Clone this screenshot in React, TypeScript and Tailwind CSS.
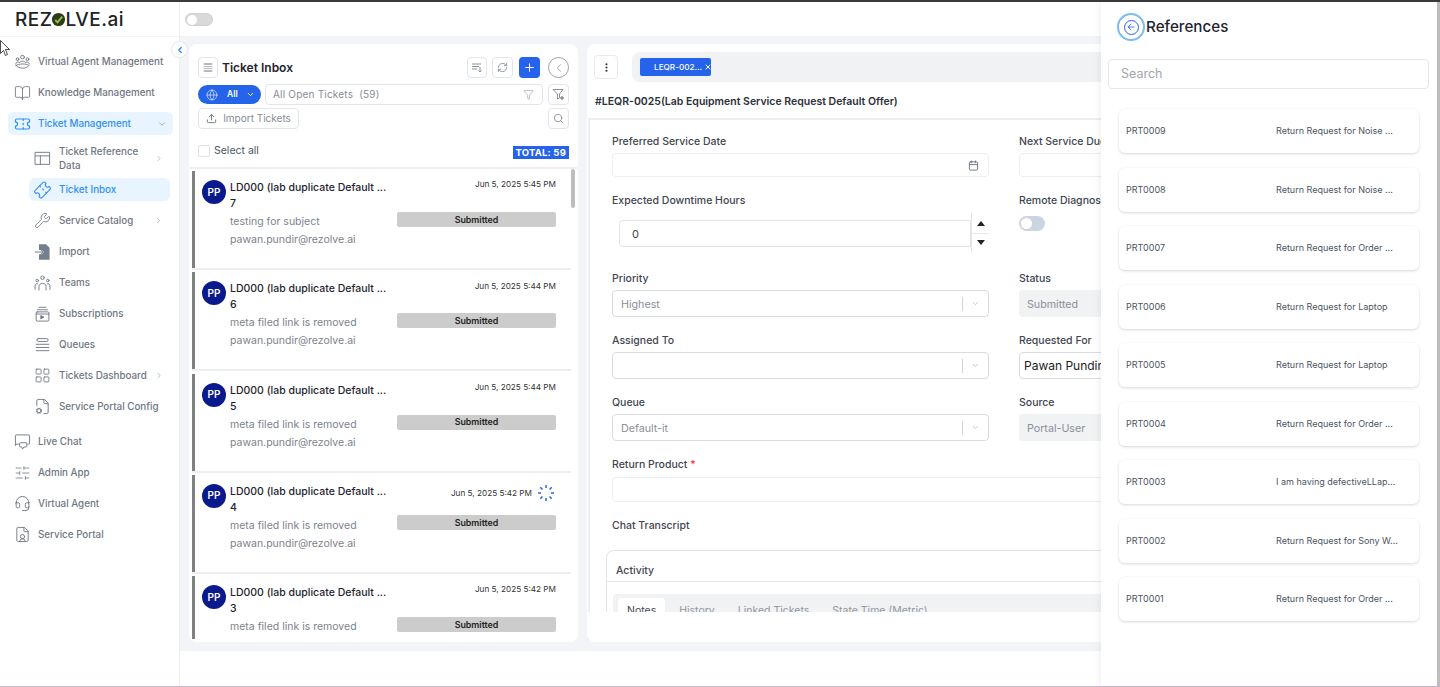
import { ChevronDown, ChevronRight, ChevronLeft, BookOpen, Ticket, Wrench, LayoutGrid, FileCog, SlidersHorizontal, Headset, FileUser, Calendar, Globe, Filter, RefreshCw, Plus, Upload, Search, ArrowLeft, EllipsisVertical, X } from "lucide-react";
import type { ReactNode } from "react";

const font = { fontFamily: "Inter, 'Noto Sans', sans-serif" };

function Svg({ children, size = 20 }: { children: ReactNode; size?: number }) {
  return (
    <svg width={size} height={size} viewBox="0 0 24 24" fill="none" stroke="currentColor" strokeWidth={1.3} strokeLinecap="round" strokeLinejoin="round">
      {children}
    </svg>
  );
}

const AgentIcon = () => (
  <Svg>
    <circle cx="12" cy="5" r="2.6" />
    <circle cx="5" cy="8" r="2" />
    <circle cx="19" cy="8" r="2" />
    <path d="M7.500 13c1-3 8-3 9 0M2.500 15c0-2.500 2-3.500 4-3M21.500 15c0-2.500-2-3.500-4-3M3 17c3 5 15 5 18 0-3-3-15-3-18 0z" />
  </Svg>
);
const TableIcon = () => (
  <Svg>
    <rect x="2" y="4" width="20" height="17" />
    <path d="M2 9h20M9 9v12" />
  </Svg>
);
const ImportIcon = () => (
  <svg width="20" height="20" viewBox="0 0 24 24" fill="#74808f">
    <path d="M7 1h10l5 5v17H7v-8h4l3-3-3-3H7z" />
    <path d="M1 12h12M10 9l3 3-3 3" fill="none" stroke="#74808f" strokeWidth="1.400" />
  </svg>
);
const TeamsIcon = () => (
  <Svg>
    <circle cx="12" cy="4.500" r="2.500" />
    <circle cx="4.500" cy="8.500" r="1.800" />
    <circle cx="19.500" cy="8.500" r="1.800" />
    <path d="M7 22v-5c0-6 10-6 10 0v5M1.500 21v-5c0-2.500 2-3.500 3.500-3M22.500 21v-5c0-2.500-2-3.500-3.500-3" />
  </Svg>
);
const SubsIcon = () => (
  <Svg>
    <path d="M7 2.500h10M5 6h14" />
    <rect x="3" y="9" width="18" height="13" rx="1.500" />
    <path d="M3 12h18" />
    <path d="M10 14.500l4 2-4 2z" fill="currentColor" />
  </Svg>
);
const QueueIcon = () => (
  <Svg>
    <rect x="4" y="3" width="16" height="4" rx="2" />
    <path d="M3 11h18M3 15.500h18M3 20h18" />
  </Svg>
);
const ChatIcon = () => (
  <svg width="20" height="20" viewBox="0 0 24 24" fill="none" stroke="currentColor" strokeWidth={1.3} strokeLinejoin="round">
    <path d="M3 2h18q1 0 1 1v11q0 1-1 1h-2M7 15H3l-1 2V3q0-1 1-1" />
    <path d="M9 13h8q1 0 1 1v4q0 1-1 1h-3l-2 3-1-3H9q-1 0-1-1v-4q0-1 1-1z" />
  </svg>
);

function NavItem({ icon, label, active, chevron }: { icon: ReactNode; label: string; active?: boolean; chevron?: boolean }) {
  return (
    <div className={`flex items-center h-[23px] ml-2 mr-[6px] pl-[6px] pr-[6px] gap-[7px] rounded-md ${active ? "bg-[#e8f4ff] text-[#2f8ff5]" : "text-[#6f7683]"}`}>
      <span className="w-[17px] flex justify-center shrink-0">{icon}</span>
      <span className="text-[9.8px] font-medium flex-1 whitespace-nowrap translate-y-px">{label}</span>
      {chevron && <ChevronDown size={10} className="text-gray-400" />}
    </div>
  );
}

function SubItem({ icon, label, active, chevron }: { icon: ReactNode; label: string; active?: boolean; chevron?: boolean }) {
  return (
    <div className={`flex items-center h-[23px] ml-[29px] mr-[9px] pl-[5px] gap-[8px] rounded-md ${active ? "bg-[#e8f4ff] text-[#2f8ff5]" : "text-[#6f7683]"}`}>
      <span className="w-[17px] flex justify-center shrink-0">{icon}</span>
      <span className="text-[9.8px] font-medium flex-1 whitespace-nowrap translate-y-px">{label}</span>
      {chevron && <ChevronRight size={9} className="text-gray-400 mr-[7px]" />}
    </div>
  );
}

function Sidebar() {
  return (
    <aside className="w-[180px] shrink-0 bg-white border-r border-[#eceef3] flex flex-col relative h-full">
      <div className="h-[35px] flex items-center pl-[15px] border-b border-[#f3f4f6]">
        <span className="text-[19px] font-medium tracking-[0.5px] text-[#222] flex items-center leading-none">
          REZ
          <svg width="15" height="15" viewBox="0 0 16 16" className="mx-[-1px]">
            <circle cx="8" cy="8" r="7" fill="#2e3a1a" />
            <path d="M4.500 8.500l2.500 2.500 5-6" fill="none" stroke="#8cc63f" strokeWidth="2" />
          </svg>
          LVE<span className="text-[#222]">.ai</span>
        </span>
      </div>
      <div className="flex flex-col pt-[13px] gap-[8px]">
        <NavItem icon={<AgentIcon />} label="Virtual Agent Management" />
        <NavItem icon={<BookOpen size={18} strokeWidth={1.2} />} label="Knowledge Management" />
        <NavItem active chevron icon={<Ticket size={18} strokeWidth={1.6} />} label="Ticket Management" />
      </div>
      <div className="flex flex-col mt-[8px] gap-[8px]">
        <div className="flex items-center h-[30px] ml-[29px] mr-[9px] pl-[5px] gap-[8px] text-[#6f7683]">
          <span className="w-[17px] flex justify-center shrink-0"><TableIcon /></span>
          <span className="text-[9.8px] font-medium w-[88px] leading-[14px] translate-y-px">Ticket Reference Data</span>
          <span className="flex-1" />
          <ChevronRight size={9} className="text-gray-400 mr-[7px]" />
        </div>
        <div className="-mt-[3px]"><SubItem active icon={<Ticket size={18} strokeWidth={1.5} className="-rotate-45" />} label="Ticket Inbox" /></div>
        <SubItem chevron icon={<Wrench size={17} strokeWidth={1.2} />} label="Service Catalog" />
        <SubItem icon={<ImportIcon />} label="Import" />
        <SubItem icon={<TeamsIcon />} label="Teams" />
        <SubItem icon={<SubsIcon />} label="Subscriptions" />
        <SubItem icon={<QueueIcon />} label="Queues" />
        <SubItem chevron icon={<LayoutGrid size={19} strokeWidth={1.2} />} label="Tickets Dashboard" />
        <SubItem icon={<FileCog size={17} strokeWidth={1.3} />} label="Service Portal Config" />
      </div>
      <div className="flex flex-col mt-[12px] gap-[8px]">
        <NavItem icon={<ChatIcon />} label="Live Chat" />
        <NavItem icon={<SlidersHorizontal size={20} strokeWidth={1.1} />} label="Admin App" />
        <NavItem icon={<Headset size={17} strokeWidth={1.3} />} label="Virtual Agent" />
        <NavItem icon={<FileUser size={17} strokeWidth={1.3} />} label="Service Portal" />
      </div>
      <div className="absolute top-[39px] -right-[9px] w-[17px] h-[17px] rounded-full bg-white border border-[#e5e7eb] flex items-center justify-center z-10">
        <ChevronLeft size={10} strokeWidth={3} className="text-[#2f7ff5]" />
      </div>
    </aside>
  );
}

function IconBtn({ children, w = "w-[21px]" }: { children: ReactNode; w?: string }) {
  return <div className={`${w} h-[21px] rounded-[4px] border border-[#e2e5ea] flex items-center justify-center text-[#8b929c] shrink-0`}>{children}</div>;
}

const tickets = [
  { n: "7", date: "Jun 5, 2025 5:45 PM", sub: "testing for subject" },
  { n: "6", date: "Jun 5, 2025 5:44 PM", sub: "meta filed link is removed" },
  { n: "5", date: "Jun 5, 2025 5:44 PM", sub: "meta filed link is removed" },
  { n: "4", date: "Jun 5, 2025 5:42 PM", sub: "meta filed link is removed", spin: true },
  { n: "3", date: "Jun 5, 2025 5:42 PM", sub: "meta filed link is removed" },
];

function Spinner() {
  const ticks = [0, 45, 90, 135, 180, 225, 270, 315];
  return (
    <svg width="18" height="18" viewBox="0 0 18 18" className="ml-[5px] mr-[1px] shrink-0">
      {ticks.map((a) => (
        <line key={a} x1="9" y1="1" x2="9" y2="4" stroke="#2563eb" strokeWidth="1.500" transform={`rotate(${a} 9 9)`} />
      ))}
    </svg>
  );
}

function TicketRow({ t }: { t: (typeof tickets)[number] }) {
  return (
    <div className="h-[101.25px] shrink-0 pt-[2px] pl-[2px] pr-[6px]">
      <div className="h-[97px] border-l-[3px] border-[#808080] flex pl-[7px] pr-[15px] pt-[9px]">
        <div className="w-[24px] h-[24px] rounded-full bg-[#0a1a8c] text-white text-[10px] font-semibold flex items-center justify-center shrink-0">PP</div>
        <div className="w-[167px] ml-[4px] shrink-0">
          <div className="text-[10.5px] font-medium leading-[16px] text-[#1f2330] whitespace-nowrap">LD000 (lab duplicate Default ...</div>
          <div className="text-[10.5px] font-medium leading-[16px] text-[#1f2330]">{t.n}</div>
          <div className="text-[10.5px] text-[#7d838d] leading-[18px] mt-[1px] whitespace-nowrap">{t.sub}</div>
          <div className="text-[10.5px] text-[#7d838d] leading-[18px] whitespace-nowrap">pawan.pundir@rezolve.ai</div>
        </div>
        <div className="flex-1 flex flex-col items-stretch">
          <div className={`text-[8.2px] text-[#333] h-[17px] flex items-center justify-end whitespace-nowrap ${t.spin ? "mt-[1px]" : "-mt-[4px]"}`}>{t.date}{t.spin && <Spinner />}</div>
          <div className={`bg-[#cccccc] rounded-[2px] h-[15px] flex items-center justify-center text-[8.9px] font-semibold text-[#222] ${t.spin ? "mt-[13px]" : "mt-[19px]"}`}>Submitted</div>
        </div>
      </div>
      <div className="h-[2px] bg-[#eceef2]" />
    </div>
  );
}

function TicketInbox() {
  return (
    <section className="w-[389px] shrink-0 bg-white rounded-lg flex flex-col overflow-hidden relative">
      <div className="px-[9px] pt-[13px]">
        <div className="flex items-center h-[21px]">
          <IconBtn w="w-[20px]"><QueueSmall /></IconBtn>
          <h2 className="ml-[4px] text-[12px] font-semibold text-[#1f2330] flex-1">Ticket Inbox</h2>
          <IconBtn w="w-[20px]">
            <svg width="12" height="12" viewBox="0 0 12 12" fill="none" stroke="currentColor" strokeWidth="1">
              <path d="M1 2h9M1 4.500h7M1 7h5M9 5v5M7.500 8.500L9 10l1.500-1.500" />
            </svg>
          </IconBtn>
          <div className="w-[5px]" />
          <IconBtn><RefreshCw size={11} /></IconBtn>
          <div className="w-[6px]" />
          <div className="w-[21px] h-[21px] rounded-[4px] bg-[#2563eb] flex items-center justify-center text-white"><Plus size={13} /></div>
          <div className="w-[8px]" />
          <div className="w-[21px] h-[21px] rounded-full border border-[#9aa1ab] flex items-center justify-center text-[#8b929c]"><ChevronLeft size={14} strokeWidth={1.2} /></div>
        </div>
        <div className="flex items-center mt-[6px] h-[21px]">
          <div className="w-[63px] h-[19px] rounded-full bg-[#2563eb] text-white flex items-center pl-[8px] shrink-0">
            <Globe size={12} strokeWidth={1.2} />
            <span className="text-[8.5px] font-semibold ml-[9px]">All</span>
            <ChevronDown size={9} strokeWidth={2.500} className="ml-[8px]" />
          </div>
          <div className="ml-[4px] flex-1 h-[21px] rounded-[4px] border border-[#e2e5ea] flex items-center pl-[7px] pr-[8px] text-[10px] text-[#868c96]">
            <span className="flex-1 tracking-[0.2px]">All Open Tickets&nbsp; (59)</span>
            <Filter size={11} strokeWidth={1.2} />
          </div>
          <div className="w-[5px]" />
          <IconBtn>
            <svg width="13" height="13" viewBox="0 0 13 13" fill="none" stroke="currentColor" strokeWidth="1">
              <path d="M1 1.500h10L7.500 6v4L5.500 11V6z" />
              <circle cx="10" cy="10" r="1.300" fill="currentColor" />
            </svg>
          </IconBtn>
        </div>
        <div className="flex items-center justify-between mt-[3px]">
          <div className="h-[21px] w-[101px] rounded-[4px] border border-[#e2e5ea] flex items-center justify-center gap-[6px] text-[10px] text-[#868c96]">
            <Upload size={11} className="text-[#6b7280]" />Import Tickets
          </div>
          <IconBtn><Search size={11} /></IconBtn>
        </div>
        <div className="flex items-center mt-[15px] h-[14px]">
          <div className="w-[12px] h-[12px] border border-[#dfe2e8] rounded-[2px]" />
          <span className="ml-[4px] text-[10.5px] text-[#4b5563] flex-1">Select all</span>
          <span className="bg-[#2563eb] text-white text-[9.5px] font-bold px-[3px] h-[13px] leading-[13px] mt-[3px] tracking-[0.2px]">TOTAL: 59</span>
        </div>
      </div>
      <div className="mt-[9px] border-t-2 border-[#eceef2] mx-[1px] flex-1 overflow-hidden relative">
        {tickets.map((t) => (
          <TicketRow key={t.n} t={t} />
        ))}
        <div className="absolute top-0 right-[2px] w-[4px] h-[39px] rounded-full bg-[#bdbdbd]" />
      </div>
      <div className="h-[3px] bg-white shrink-0" />
    </section>
  );
}

function QueueSmall() {
  return (
    <svg width="12" height="12" viewBox="0 0 12 12" fill="#b4b9c1">
      <rect x="1.500" y="1" width="9" height="2" rx="1" />
      <rect x="1.500" y="4" width="9" height="1" />
      <rect x="1.500" y="6" width="9" height="1" />
      <rect x="1.500" y="8" width="9" height="2" rx="1" />
    </svg>
  );
}

function Label({ children }: { children: ReactNode }) {
  return <div className="text-[10.5px] font-medium text-[#3f4652] leading-[14px] whitespace-nowrap translate-y-px">{children}</div>;
}

function SelectBox({ value }: { value?: string }) {
  return (
    <div className="mt-[5px] h-[27px] rounded-[4px] border border-[#d9dce2] flex items-center pl-[8px] text-[10.7px] text-[#8a8f98]">
      <span className="flex-1 translate-y-[1.5px]">{value}</span>
      <span className="w-px h-[14px] bg-[#cfd2d8]" />
      <ChevronDown size={9} className="text-[#b5b9c0] mx-[8px]" />
    </div>
  );
}

function ReadOnly({ value }: { value: string }) {
  return (
    <div className="mt-[5px] h-[27px] rounded-[4px] bg-[#f1f2f4] flex items-center pl-[8px] text-[10.7px] text-[#8a8f98]">
      <span className="translate-y-[1.5px]">{value}</span>
    </div>
  );
}

function TicketDetail() {
  return (
    <section className="flex-1 min-w-0 bg-white rounded-lg flex flex-col overflow-hidden pb-[30px]">
      <div className="flex items-center pl-[7px] pt-[8px] h-[38px] shrink-0">
        <div className="w-[24px] h-[24px] rounded-[4px] border border-[#e8eaee] flex items-center justify-center text-[#333]"><EllipsisVertical size={11} strokeWidth={2.500} /></div>
        <div className="ml-[14px] flex-1 h-[30px] rounded-l-lg bg-[#f1f2f4] flex items-center pl-[8px]">
          <div className="w-[71px] h-[18px] rounded-[2px] bg-[#2563eb] text-white text-[8.2px] font-medium flex items-center pl-[14px] whitespace-nowrap">
            LEQR-002...<X size={8} strokeWidth={3} className="ml-[2px] shrink-0" />
          </div>
        </div>
      </div>
      <div className="h-[36px] shrink-0 flex items-center pl-[8px] pt-[3px] text-[10.5px] font-semibold text-[#2b303a] whitespace-nowrap">#LEQR-0025(Lab Equipment Service Request Default Offer)</div>
      <div className="flex-1 overflow-hidden border-t-2 border-l-2 border-[#eceef2] ml-[1px] pl-[22px]">
        <div className="grid grid-cols-[377px_1fr] gap-x-[30px] pt-[14px]">
          <div>
            <Label>Preferred Service Date</Label>
            <div className="mt-[5px] h-[24px] rounded-[4px] border border-[#eceef2] flex items-center justify-end pr-[9px] text-[#6b7280]"><Calendar size={11} /></div>
          </div>
          <div>
            <Label>Next Service Due Date</Label>
            <div className="mt-[5px] h-[24px] rounded-[4px] border border-[#eceef2]" />
          </div>
          <div className="mt-[16px] h-[62px]">
            <Label>Expected Downtime Hours</Label>
            <div className="flex mt-[13px] pl-[7px]">
              <div className="flex-1 h-[27px] rounded-l-[4px] border border-[#e2e5ea] flex items-center pl-[12px] text-[11px] text-[#444]"><span className="translate-y-px">0</span></div>
              <div className="w-[18px] h-[40px] -mt-[7px] border-l border-[#e2e5ea] flex flex-col items-center justify-between py-[8px]">
                <span className="w-0 h-0 border-x-[4px] border-x-transparent border-b-[5px] border-b-[#222]" />
                <span className="w-full h-px bg-[#e8eaee]" />
                <span className="w-0 h-0 border-x-[4px] border-x-transparent border-t-[5px] border-t-[#222]" />
              </div>
            </div>
          </div>
          <div className="mt-[16px]">
            <Label>Remote Diagnosis</Label>
            <div className="mt-[9px] w-[26px] h-[15px] rounded-full bg-[#cbd5e1] p-[2px]"><div className="w-[11px] h-[11px] rounded-full bg-white" /></div>
          </div>
          <div className="mt-[16px]"><Label>Priority</Label><SelectBox value="Highest" /></div>
          <div className="mt-[16px]"><Label>Status</Label><ReadOnly value="Submitted" /></div>
          <div className="mt-[16px]"><Label>Assigned To</Label><SelectBox /></div>
          <div className="mt-[16px]">
            <Label>Requested For</Label>
            <div className="mt-[5px] h-[27px] rounded-[4px] border border-[#d9dce2] flex items-center pl-[4px] text-[12px] text-[#222] whitespace-nowrap">Pawan Pundir</div>
          </div>
          <div className="mt-[16px]"><Label>Queue</Label><SelectBox value="Default-it" /></div>
          <div className="mt-[16px]"><Label>Source</Label><ReadOnly value="Portal-User" /></div>
          <div className="col-span-2 mt-[16px]">
            <Label>Return Product <span className="text-red-500">*</span></Label>
            <div className="mt-[6px] h-[25px] rounded-[4px] border border-[#eceef2]" />
          </div>
          <div className="col-span-2 mt-[16px]"><Label>Chat Transcript</Label></div>
        </div>
        <div className="mt-[18px] -ml-[6px] rounded-t-lg border border-[#e2e5ea] h-[100px]">
          <div className="h-[31px] border-b border-[#e5e7eb] flex items-center pl-[9px] pt-[9px] text-[10.5px] font-medium text-[#3f4652]">Activity</div>
          <div className="mx-[6px] mt-[12px] bg-[#f1f2f4] rounded-t-[4px] h-[40px] flex pl-[5px] pt-[4px] text-[10.5px] leading-[14px] text-[#9298a1]">
            <div className="bg-white rounded-t-[4px] h-[30px] px-[9px] pt-[6px] text-[#3f4652]">Notes</div>
            <div className="ml-[14px] pt-[6px]">History</div>
            <div className="ml-[23px] pt-[6px]">Linked Tickets</div>
            <div className="ml-[23px] pt-[6px]">State Time (Metric)</div>
          </div>
        </div>
      </div>
    </section>
  );
}

const references = [
  ["PRT0009", "Return Request for Noise ..."],
  ["PRT0008", "Return Request for Noise ..."],
  ["PRT0007", "Return Request for Order ..."],
  ["PRT0006", "Return Request for Laptop"],
  ["PRT0005", "Return Request for Laptop"],
  ["PRT0004", "Return Request for Order ..."],
  ["PRT0003", "I am having defectiveLLap..."],
  ["PRT0002", "Return Request for Sony W..."],
  ["PRT0001", "Return Request for Order ..."],
];

function ReferencesPanel() {
  return (
    <div className="absolute top-[2px] right-0 bottom-[1px] w-[339px] bg-white border-r-[3px] border-[#bdbdbd] shadow-[-2px_0_6px_rgba(0,0,0,0.06)] z-20 flex flex-col">
      <div className="flex items-center pl-[16px] mt-[11px] h-[28px]">
        <div className="w-[28px] h-[28px] rounded-full border-2 border-[#7dbcf2] flex items-center justify-center">
          <div className="w-[15px] h-[15px] rounded-full border-[1.5px] border-[#2563eb] flex items-center justify-center text-[#2563eb]"><ArrowLeft size={10} strokeWidth={2} /></div>
        </div>
        <span className="text-[15.2px] font-medium text-[#1f2330] ml-[1px]">References</span>
      </div>
      <div className="mx-[7px] w-[321px] mt-[18px] h-[30px] rounded-[4px] border border-[#e5e7eb] flex items-center pl-[12px] text-[12.5px] text-[#a0a5ae] shrink-0">Search</div>
      <div className="mt-[20px] flex flex-col gap-[14.500px] ml-[18px]">
        {references.map(([id, title]) => (
          <div key={id} className="w-[300px] h-[44px] rounded-md bg-white shadow-[0_1px_3px_rgba(0,0,0,0.16)] flex items-center pl-[7px] text-[9px] text-[#4b5563]">
            <span className="w-[150px]">{id}</span>
            <span>{title}</span>
          </div>
        ))}
      </div>
    </div>
  );
}

export default function App() {
  return (
    <div style={font} className="relative w-[1440px] h-[687px] overflow-hidden bg-white flex flex-col">
      <div className="h-[2px] bg-[#3a3a3a] shrink-0" />
      <div className="flex-1 flex min-h-0 relative">
        <Sidebar />
        <div className="flex-1 min-w-0 flex flex-col">
          <div className="h-[35px] shrink-0 border-b border-[#f1f2f5] flex items-center pl-[5px] bg-white">
            <div className="w-[28px] h-[13px] rounded-full bg-[#d9d9d9] border border-[#cfcfcf] p-[1px]"><div className="w-[10px] h-[10px] rounded-full bg-white" /></div>
          </div>
          <main className="h-[614px] shrink-0 bg-[#f3f4f8] flex gap-[9px] px-[9px] pt-[7px] pb-[9px]">
            <TicketInbox />
            <TicketDetail />
          </main>
        </div>
        <svg width="12" height="17" viewBox="0 0 12 17" className="absolute left-0 top-[38px] z-30">
          <path d="M0.500 0.500v13l3-3 2 5 2-1-2-5h4z" fill="#fff" stroke="#222" strokeWidth="0.800" />
        </svg>
      </div>
      <div className="h-px bg-[#c9b8c8] shrink-0" />
      <ReferencesPanel />
    </div>
  );
}
